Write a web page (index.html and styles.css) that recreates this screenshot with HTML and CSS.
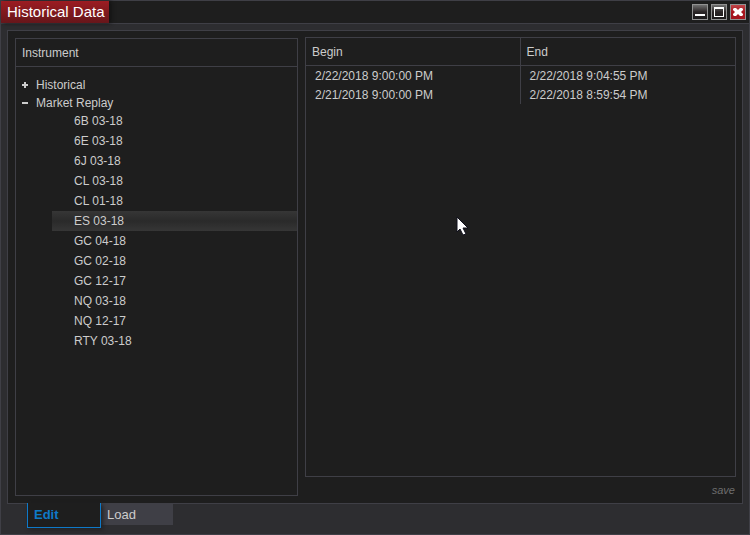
FILE: index.html
```html
<!DOCTYPE html>
<html lang="en">
<head>
<meta charset="utf-8">
<meta name="viewport" content="width=device-width, initial-scale=1">
<title>Historical Data</title>
<link rel="stylesheet" href="styles.css">
</head>
<body>
<div class="window">
  <header class="titlebar">
    <h1 class="title">Historical Data</h1>
    <div class="controls">
      <button class="control" type="button" aria-label="Minimize"><svg viewBox="0 0 14 14"><path d="M2 9h10v2H2z"/></svg></button>
      <button class="control" type="button" aria-label="Maximize"><svg viewBox="0 0 14 14"><path fill-rule="evenodd" d="M2 2h10v10H2zM3 4v7h8V4z"/></svg></button>
      <button class="control close" type="button" aria-label="Close"><svg viewBox="0 0 14 14"><path d="M3 3h2l2 2 2-2h2l1 1v1l-2 2 2 2v1l-1 1H9l-2-2-2 2H3l-1-1V9l2-2-2-2V4z"/></svg></button>
    </div>
  </header>
  <div class="body">
    <main class="content">
      <section class="instruments">
        <h2 class="heading">Instrument</h2>
        <ul class="tree">
          <li><button class="branch" type="button" aria-expanded="false"><svg viewBox="0 0 6 6"><path d="M2 0h2v2h2v2H4v2H2V4H0V2h2z"/></svg>Historical</button></li>
          <li><button class="branch" type="button" aria-expanded="true"><svg viewBox="0 0 6 6"><path d="M0 2h6v2H0z"/></svg>Market Replay</button>
            <ul class="leaves">
              <li><button class="leaf" type="button">6B 03-18</button></li>
              <li><button class="leaf" type="button">6E 03-18</button></li>
              <li><button class="leaf" type="button">6J 03-18</button></li>
              <li><button class="leaf" type="button">CL 03-18</button></li>
              <li><button class="leaf" type="button">CL 01-18</button></li>
              <li><button class="leaf selected" type="button">ES 03-18</button></li>
              <li><button class="leaf" type="button">GC 04-18</button></li>
              <li><button class="leaf" type="button">GC 02-18</button></li>
              <li><button class="leaf" type="button">GC 12-17</button></li>
              <li><button class="leaf" type="button">NQ 03-18</button></li>
              <li><button class="leaf" type="button">NQ 12-17</button></li>
              <li><button class="leaf" type="button">RTY 03-18</button></li>
            </ul>
          </li>
        </ul>
      </section>
      <section class="ranges">
        <div class="grid">
          <table>
            <thead><tr><th scope="col">Begin</th><th scope="col">End</th></tr></thead>
            <tbody>
              <tr><td>2/22/2018 9:00:00 PM</td><td>2/22/2018 9:04:55 PM</td></tr>
              <tr><td>2/21/2018 9:00:00 PM</td><td>2/22/2018 8:59:54 PM</td></tr>
            </tbody>
          </table>
        </div>
        <button class="save" type="button" disabled>save</button>
      </section>
    </main>
    <nav class="tabs">
      <button class="tab active" type="button">Edit</button>
      <button class="tab" type="button">Load</button>
    </nav>
  </div>
  <svg class="pointer" viewBox="0 0 13 20" aria-hidden="true"><path d="M1 1v15l3-3 3 6 3-1-3-6h5z"/></svg>
</div>
</body>
</html>
```
FILE: styles.css
```css
* {
  box-sizing: border-box;
}

body {
  margin: 0;
  background: #2d2d30;
  color: #cccccc;
  font: 12px/18px "Liberation Sans", Arial, sans-serif;
}

button {
  margin: 0;
  padding: 0;
  border: 0;
  background: none;
  color: inherit;
  font: inherit;
  text-align: left;
}

h1,
h2,
ul {
  margin: 0;
  padding: 0;
  font-weight: normal;
  list-style: none;
}

.window {
  position: relative;
  display: flex;
  flex-direction: column;
  min-height: 100vh;
  border: 1px solid #3f3f46;
}

.titlebar {
  display: flex;
  justify-content: space-between;
  height: 23px;
  border-bottom: 1px solid #3f3f46;
  background: #1e1e1e;
}

.title {
  padding: 0 4px 0 6px;
  background: linear-gradient(#9c1c22, #66161a);
  box-shadow: 2px 0 4px #111111;
  color: #ffffff;
  font-size: 15px;
  line-height: 22px;
}

.controls {
  display: flex;
  gap: 3px;
  padding: 3px 3px 0 0;
}

.control {
  width: 16px;
  height: 16px;
  border: 1px solid #929292;
  background: linear-gradient(#707070, #2a2425 50%, #1c1a1b);
}

.control svg {
  display: block;
  width: 14px;
  height: 14px;
  fill: #ffffff;
}

.close {
  background: linear-gradient(#c0464a, #a8141c 50%, #a3161e);
}

.body {
  display: flex;
  flex: 1;
  flex-direction: column;
  padding: 6px;
}

.content {
  display: grid;
  flex: 1;
  grid-template-columns: 283fr 431fr;
  gap: 7px;
  padding: 6px 6px 7px 7px;
  border: 1px solid #3f3f46;
  background: #1e1e1e;
}

.instruments {
  margin-top: 1px;
  border: 1px solid #3f3f46;
}

.heading {
  padding: 2px 6px 0;
  border-bottom: 1px solid #3f3f46;
  font-size: 12px;
  line-height: 25px;
}

.tree {
  padding-top: 9px;
}

.branch {
  display: flex;
  gap: 8px;
  align-items: center;
  width: 100%;
  padding-left: 6px;
}

.branch svg {
  width: 6px;
  height: 6px;
  fill: #cccccc;
}

.leaves {
  margin-top: -1px;
  padding-left: 36px;
}

.leaf {
  display: block;
  width: 100%;
  padding-left: 22px;
  line-height: 20px;
}

.selected {
  background: linear-gradient(#363636, #2a2a2a 50%, #363636);
}

.ranges {
  display: flex;
  flex-direction: column;
}

.grid {
  flex: 1;
  border: 1px solid #3f3f46;
}

table {
  width: 100%;
  border-collapse: separate;
  border-spacing: 0;
  table-layout: fixed;
}

th {
  padding: 2px 6px 0;
  border-bottom: 1px solid #3f3f46;
  font-weight: normal;
  line-height: 25px;
  text-align: left;
}

td {
  padding: 2px 9px 0;
  line-height: 17px;
}

th:first-child,
td:first-child {
  border-right: 1px solid #3f3f46;
}

.save {
  align-self: flex-end;
  margin-top: 7px;
  padding-right: 1px;
  color: #6e6e6e;
  font-size: 11px;
  font-style: italic;
  line-height: 12px;
}

.tabs {
  display: flex;
  align-items: flex-start;
  margin-top: -1px;
  padding-left: 20px;
}

.tab {
  width: 72px;
  margin-top: 1px;
  padding-left: 6px;
  background: #3f3f46;
  font-size: 13px;
  line-height: 21px;
}

.active {
  position: relative;
  width: 74px;
  margin-top: 0;
  border: 1px solid #0e79c8;
  border-top: 0;
  background: #1e1e1e;
  box-shadow: 2px 2px 4px #222224;
  color: #0e79c8;
  font-weight: bold;
  line-height: 24px;
}

.pointer {
  position: absolute;
  top: 215px;
  left: 455px;
  width: 13px;
  height: 20px;
  fill: #ffffff;
  stroke: #10101c;
}
```
